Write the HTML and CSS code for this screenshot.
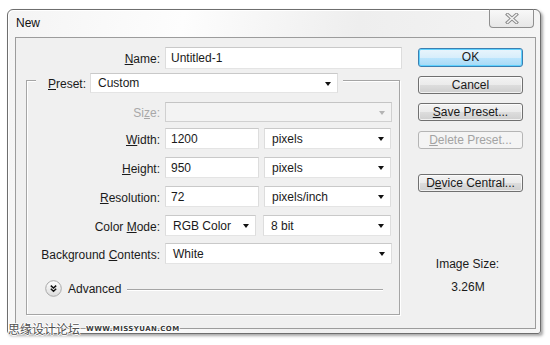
FILE: index.html
```html
<!DOCTYPE html>
<html>
<head>
<meta charset="utf-8">
<link rel="stylesheet" href="styles.css">
</head>
<body>
<div class="window">
  <div class="titlebar">
    <span class="title">New</span>
    <div class="close">
      <svg width="14" height="11" viewBox="0 0 14 11">
        <path d="M2.5 1.5 L11.5 9.5 M11.5 1.5 L2.5 9.5" stroke="#8c8c8c" stroke-width="3.4" stroke-linecap="square" fill="none"/>
        <path d="M2.5 1.5 L11.5 9.5 M11.5 1.5 L2.5 9.5" stroke="#f4f4f4" stroke-width="1.4" stroke-linecap="square" fill="none"/>
      </svg>
    </div>
  </div>
  <div class="client">
    <div class="form">
      <div class="row name-row">
        <span class="lbl lbl-wide"><u>N</u>ame:</span>
        <div class="field input w-name">Untitled-1</div>
      </div>
      <div class="group">
        <div class="group-head">
          <span class="lbl-preset"><u>P</u>reset:</span>
          <div class="field select w-preset">Custom<i class="arrow"></i></div>
        </div>
        <div class="row row-size">
          <span class="lbl disabled">Si<u>z</u>e:</span>
          <div class="field select off w-full"><i class="arrow arrow-off"></i></div>
        </div>
        <div class="row row-gap">
          <span class="lbl"><u>W</u>idth:</span>
          <div class="field input w-num">1200</div>
          <div class="field select w-unit">pixels<i class="arrow"></i></div>
        </div>
        <div class="row row-gap">
          <span class="lbl"><u>H</u>eight:</span>
          <div class="field input w-num">950</div>
          <div class="field select w-unit">pixels<i class="arrow"></i></div>
        </div>
        <div class="row row-gap">
          <span class="lbl"><u>R</u>esolution:</span>
          <div class="field input w-num">72</div>
          <div class="field select w-unit">pixels/inch<i class="arrow"></i></div>
        </div>
        <div class="row row-gap2">
          <span class="lbl">Color <u>M</u>ode:</span>
          <div class="field select w-mode">RGB Color<i class="arrow"></i></div>
          <div class="field select w-bit">8 bit<i class="arrow"></i></div>
        </div>
        <div class="row">
          <span class="lbl">Background <u>C</u>ontents:</span>
          <div class="field select w-full">White<i class="arrow"></i></div>
        </div>
        <div class="advanced">
          <span class="adv-icon">
            <svg width="17" height="17" viewBox="0 0 17 17">
              <defs>
                <linearGradient id="g" x1="0" y1="0" x2="0" y2="1">
                  <stop offset="0" stop-color="#ffffff"/>
                  <stop offset="1" stop-color="#dcdcdc"/>
                </linearGradient>
              </defs>
              <circle cx="8.5" cy="8.5" r="7.8" fill="url(#g)" stroke="#a9a9a9" stroke-width="1"/>
              <path d="M5.8 5.6 L8.5 8 L11.2 5.6 M5.8 8.8 L8.5 11.2 L11.2 8.8" stroke="#111" stroke-width="1.5" fill="none"/>
            </svg>
          </span>
          <span class="adv-text">Advanced</span>
          <span class="adv-line"></span>
        </div>
      </div>
    </div>
    <div class="side">
      <div class="btn btn-ok">OK</div>
      <div class="btn b2">Cancel</div>
      <div class="btn b3"><u>S</u>ave Preset...</div>
      <div class="btn btn-off b4"><u>D</u>elete Preset...</div>
      <div class="btn b5">D<u>e</u>vice Central...</div>
      <div class="imgsize">Image Size:</div>
      <div class="imgsize-val">3.26M</div>
    </div>
  </div>
  <div class="watermark"><span class="wm-cn">思缘设计论坛</span><span class="wm-url">WWW.MISSYUAN.COM</span></div>
</div>
</body>
</html>
```

FILE: styles.css
```css
html, body {
  margin: 0;
  padding: 0;
  background: #ffffff;
}
body {
  font-family: "Liberation Sans", Arial, sans-serif;
  font-size: 12px;
  color: #1a1a1a;
  width: 550px;
  height: 345px;
  overflow: hidden;
}
u { text-decoration: underline; text-underline-offset: 1px; }

.window {
  position: relative;
  box-sizing: border-box;
  width: 534px;
  height: 325px;
  margin: 9px 0 0 7px;
  padding: 0 4px 4px 7px;
  border: 1px solid #6e6e6e;
  border-radius: 6px 6px 3px 3px;
  background: linear-gradient(100deg, #f4f4f4 0%, #fdfdfd 30%, #eeeeee 60%, #f6f6f6 100%);
  box-shadow: 2px 2px 3px rgba(0,0,0,0.35), inset 1px 1px 0 #ffffff;
}

.titlebar {
  display: flex;
  justify-content: space-between;
  align-items: flex-start;
  height: 27px;
}
.title {
  padding: 6px 0 0 1px;
  font-size: 12px;
  color: #111;
}
.close {
  box-sizing: border-box;
  width: 45px;
  height: 19px;
  margin: -1px 2px 0 0;
  border: 1px solid #8f8f8f;
  border-top-color: #6e6e6e;
  border-radius: 0 0 4px 4px;
  background: linear-gradient(#f8f8f8, #e7e7e7);
  display: flex;
  align-items: center;
  justify-content: center;
}

.client {
  box-sizing: border-box;
  width: 521px;
  height: 292px;
  border: 1px solid #9c9c9c;
  background: #f0f0f0;
  display: flex;
}

.form {
  width: 390px;
  padding-top: 9px;
}

.row {
  display: flex;
  align-items: center;
}
.lbl {
  width: 133px;
  margin-right: 5px;
  padding-top: 2px;
  line-height: 14px;
  text-align: right;
  white-space: nowrap;
}
.lbl-wide { width: 144px; }
.disabled { color: #a8a8a8; }

.field {
  position: relative;
  box-sizing: border-box;
  height: 21px;
  padding-top: 1px;
  line-height: 18px;
  background: #ffffff;
  border: 1px solid;
  border-color: #c9c9c9 #dddddd #e4e4e4 #dddddd;
  white-space: nowrap;
}
.input { padding-left: 5px; }
.select { padding-left: 7px; }
.off { background: #f3f3f3; border-color: #c4c4c4 #d0d0d0 #d0d0d0 #d0d0d0; }

.arrow {
  position: absolute;
  right: 6px;
  top: 8px;
  width: 0;
  height: 0;
  border-left: 3.5px solid transparent;
  border-right: 3.5px solid transparent;
  border-top: 4px solid #111;
}
.arrow-off { border-top-color: #b4b4b4; }

.w-name { width: 237px; height: 22px; }
.w-preset { width: 248px; height: 20px; line-height: 17px; }
.w-full { width: 227px; }
.w-num { width: 94px; margin-right: 5px; }
.w-unit { width: 127px; }
.w-mode { width: 91px; margin-right: 7px; }
.w-bit { width: 128px; }

.group {
  box-sizing: border-box;
  width: 374px;
  margin: 11px 0 0 10px;
  border: 1px solid #a5a5a5;
  box-shadow: inset 1px 1px 0 #ffffff, 1px 1px 0 #ffffff;
}
.group-head {
  display: flex;
  align-items: center;
  width: fit-content;
  margin: -8px 0 9px 9px;
  padding: 0 5px 0 12px;
  background: #f0f0f0;
}
.lbl-preset { width: 42px; padding-top: 2px; line-height: 14px; }

.row-size { margin-bottom: 6px; }
.row-size .field { height: 20px; }
.row-gap { margin-bottom: 8px; }
.row-gap2 { margin-bottom: 7px; }

.advanced {
  display: flex;
  align-items: center;
  height: 17px;
  margin: 16px 0 17px 0;
  padding-left: 18px;
}
.adv-icon { width: 17px; height: 17px; display: flex; }
.adv-text { margin-left: 6px; padding-top: 1px; }
.adv-line {
  flex: 1;
  height: 1px;
  margin: 1px 16px 0 6px;
  background: #a5a5a5;
  box-shadow: 0 1px 0 #ffffff;
}

.side {
  width: 105px;
  margin-left: 12px;
  padding-top: 10px;
}
.btn {
  box-sizing: border-box;
  height: 18px;
  line-height: 16px;
  text-align: center;
  border: 1px solid #707070;
  border-radius: 3px;
  background: linear-gradient(#f3f3f3 0%, #ebebeb 50%, #dddddd 51%, #cfcfcf 100%);
  box-shadow: inset 0 0 0 1px rgba(255,255,255,0.7);
  white-space: nowrap;
}
.btn-ok {
  height: 19px;
  line-height: 17px;
  border-color: #3c7fb1;
  background: linear-gradient(#e9f5fc 0%, #d8eefb 50%, #bde6fd 51%, #a7d9f5 100%);
  box-shadow: inset 0 0 0 1px #5fd2ff;
}
.b2 { margin-top: 9px; }
.b3 { margin-top: 9px; }
.b4 { margin-top: 10px; }
.b5 { margin-top: 25px; }
.btn-off {
  color: #a3a3a3;
  border-color: #b5b5b5;
  background: #f4f4f4;
  box-shadow: none;
}

.imgsize {
  margin-top: 65px;
  padding-right: 6px;
  text-align: center;
  line-height: 14px;
}
.imgsize-val {
  margin-top: 9px;
  padding-right: 5px;
  text-align: center;
  line-height: 14px;
}

.watermark {
  position: absolute;
  left: 0;
  top: 312px;
  display: flex;
  align-items: center;
  white-space: nowrap;
}
.wm-cn {
  font-family: "Noto Sans CJK SC", sans-serif;
  font-size: 12px;
  line-height: 13px;
  color: #505050;
  text-shadow: 1px 0 0 #fff, -1px 0 0 #fff, 0 1px 0 #fff, 0 -1px 0 #fff;
}
.wm-url {
  margin-left: 6px;
  font-family: "DejaVu Sans", sans-serif;
  font-size: 7px;
  font-weight: bold;
  letter-spacing: 0.4px;
  color: #3a3a3a;
  text-shadow: 1px 0 0 #fff, -1px 0 0 #fff, 0 1px 0 #fff, 0 -1px 0 #fff;
}
```
